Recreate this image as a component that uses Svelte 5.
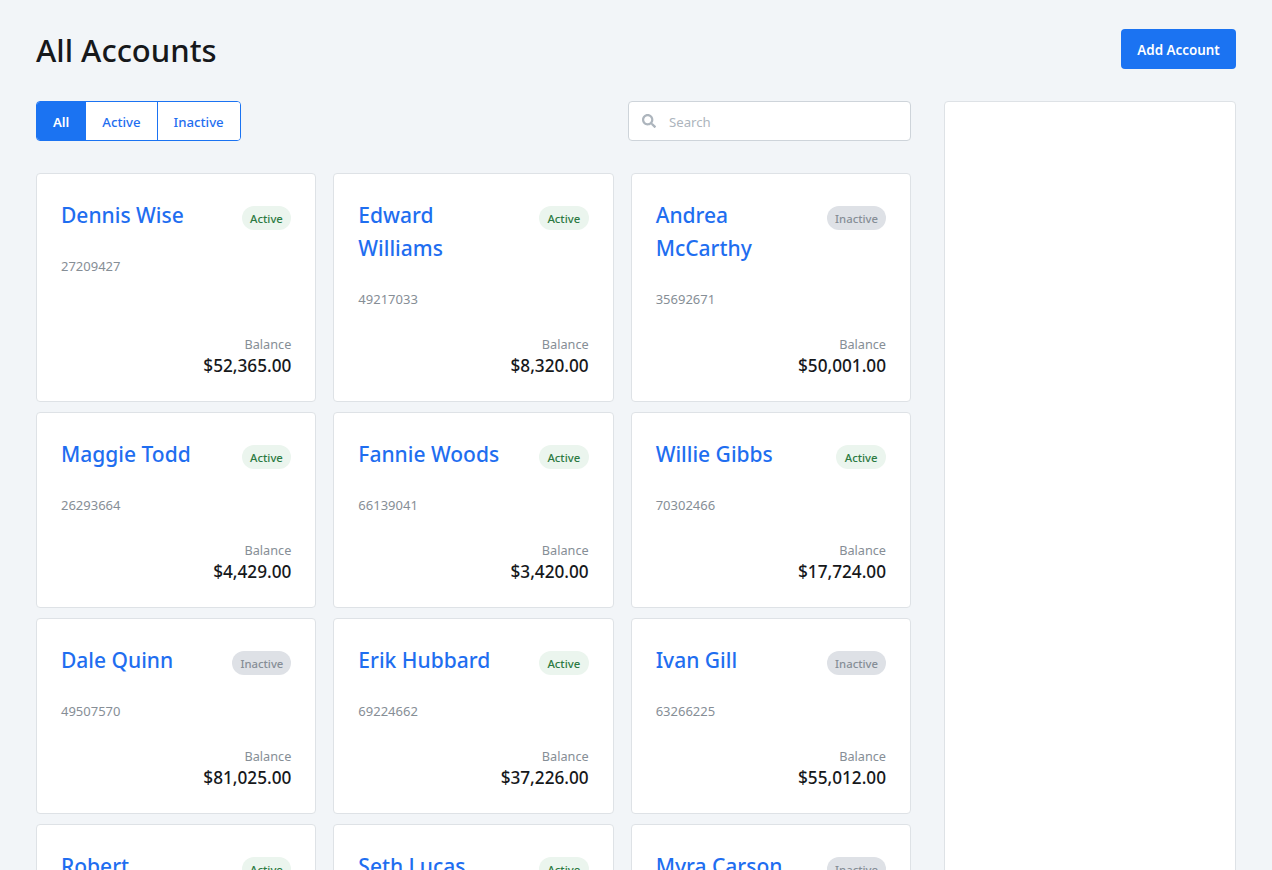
<script lang="ts">
  const accounts = [
    { name: 'Dennis Wise', number: '27209427', status: 'Active', balance: '$52,365.00' },
    { name: 'Edward Williams', number: '49217033', status: 'Active', balance: '$8,320.00' },
    { name: 'Andrea McCarthy', number: '35692671', status: 'Inactive', balance: '$50,001.00' },
    { name: 'Maggie Todd', number: '26293664', status: 'Active', balance: '$4,429.00' },
    { name: 'Fannie Woods', number: '66139041', status: 'Active', balance: '$3,420.00' },
    { name: 'Willie Gibbs', number: '70302466', status: 'Active', balance: '$17,724.00' },
    { name: 'Dale Quinn', number: '49507570', status: 'Inactive', balance: '$81,025.00' },
    { name: 'Erik Hubbard', number: '69224662', status: 'Active', balance: '$37,226.00' },
    { name: 'Ivan Gill', number: '63266225', status: 'Inactive', balance: '$55,012.00' },
    { name: 'Robert Fitzgerald', number: '51840236', status: 'Active', balance: '$12,870.00' },
    { name: 'Seth Lucas', number: '30471958', status: 'Active', balance: '$26,140.00' },
    { name: 'Myra Carson', number: '84126093', status: 'Inactive', balance: '$9,315.00' }
  ];

  const filters = ['All', 'Active', 'Inactive'];
  let filter = $state('All');
  let search = $state('');
</script>

<div class="page">
  <header class="top">
    <h1>All Accounts</h1>
    <button class="add-btn">Add Account</button>
  </header>

  <div class="layout">
    <main>
      <div class="toolbar">
        <div class="filters">
          {#each filters as f}
            <button class:on={filter === f} onclick={() => (filter = f)}>{f}</button>
          {/each}
        </div>
        <label class="search">
          <svg width="14" height="14" viewBox="0 0 512 512" aria-hidden="true">
            <path fill="#adb5bd" d="M505 442.700L405.300 343c-4.500-4.500-10.600-7-17-7H372c27.600-35.300 44-79.700 44-128C416 93.100 322.900 0 208 0S0 93.100 0 208s93.100 208 208 208c48.300 0 92.700-16.400 128-44v16.300c0 6.400 2.500 12.500 7 17l99.700 99.700c9.400 9.400 24.600 9.400 33.900 0l28.300-28.300c9.400-9.400 9.400-24.600.1-34zM208 336c-70.700 0-128-57.200-128-128 0-70.700 57.200-128 128-128 70.700 0 128 57.200 128 128 0 70.700-57.200 128-128 128z"/>
          </svg>
          <input bind:value={search} placeholder="Search" />
        </label>
      </div>

      <div class="cards">
        {#each accounts as a}
          <article class="card">
            <div class="card-head">
              <a href="#top" class="name">{a.name}</a>
              <span class="badge" class:inactive={a.status === 'Inactive'}>{a.status}</span>
            </div>
            <div class="number">{a.number}</div>
            <div class="balance">
              <div class="label">Balance</div>
              <div class="amount">{a.balance}</div>
            </div>
          </article>
        {/each}
      </div>
    </main>

    <aside class="details"></aside>
  </div>
</div>

<style>
  :global(body) {
    margin: 0;
    background: #f2f5f8;
    font-family: "Noto Sans", "Open Sans", sans-serif;
    color: #16181b;
  }
  .page {
    padding: 29px 36px 36px;
  }
  .top {
    display: flex;
    justify-content: space-between;
    align-items: flex-start;
    height: 72px;
  }
  h1 {
    margin: 0;
    font-size: 31px;
    font-weight: 500;
    line-height: 42px;
  }
  .add-btn {
    width: 115px;
    height: 40px;
    border: none;
    border-radius: 4px;
    padding: 2px 0 0;
    background: #1b73f2;
    color: #fff;
    font: 600 13.400px "Noto Sans", sans-serif;
  }
  .layout {
    display: grid;
    grid-template-columns: 875px 292px;
    gap: 33px;
  }
  .toolbar {
    display: flex;
    justify-content: space-between;
    height: 72px;
  }
  .filters {
    display: flex;
    height: 40px;
    box-sizing: border-box;
    border: 1px solid #1b73f2;
    border-radius: 4px;
    background: #fff;
    overflow: hidden;
  }
  .filters button {
    border: none;
    border-left: 1px solid #1b73f2;
    padding: 2px 16px 0;
    background: #fff;
    color: #1f6ef0;
    font: 500 13.200px "Noto Sans", sans-serif;
  }
  .filters button:first-child {
    border-left: none;
  }
  .filters button.on {
    background: #1b73f2;
    color: #fff;
    font-weight: 600;
  }
  .search {
    display: flex;
    align-items: center;
    gap: 13px;
    box-sizing: border-box;
    width: 283px;
    height: 40px;
    padding: 0 13px;
    border: 1px solid #ced4da;
    border-radius: 4px;
    background: #fff;
  }
  .search input {
    flex: 1;
    min-width: 0;
    border: none;
    outline: none;
    padding: 2px 0 0;
    font: 400 13.200px "Noto Sans", sans-serif;
    color: #495057;
  }
  .search input::placeholder {
    color: #adb5bd;
    opacity: 1;
  }
  .cards {
    display: grid;
    grid-template-columns: repeat(3, 1fr);
    gap: 10px 17px;
  }
  .card {
    display: flex;
    flex-direction: column;
    box-sizing: border-box;
    padding: 25px 24px 24px;
    border: 1px solid #dee2e6;
    border-radius: 4px;
    background: #fff;
  }
  .card-head {
    display: flex;
    justify-content: space-between;
    align-items: flex-start;
    gap: 24px;
  }
  .name {
    font-size: 21px;
    font-weight: 500;
    line-height: 33px;
    color: #1f6ef0;
    text-decoration: none;
  }
  .badge {
    flex: none;
    margin-top: 7px;
    padding: 0 8.500px;
    height: 24px;
    border-radius: 12px;
    background: #ebf5ee;
    color: #2c7a42;
    font-size: 11.300px;
    font-weight: 500;
    line-height: 25px;
  }
  .badge.inactive {
    padding: 0 8px;
    background: #dee1e6;
    color: #868e96;
  }
  .number {
    margin: 24px 0 25px;
    font-size: 13px;
    line-height: 20px;
    color: #868e96;
  }
  .balance {
    margin-top: auto;
    text-align: right;
  }
  .label {
    font-size: 12.700px;
    line-height: 20px;
    color: #868e96;
  }
  .amount {
    font-size: 17.200px;
    font-weight: 500;
    line-height: 23px;
  }
  .details {
    box-sizing: border-box;
    border: 1px solid #dee2e6;
    border-radius: 4px;
    background: #fff;
  }
</style>
